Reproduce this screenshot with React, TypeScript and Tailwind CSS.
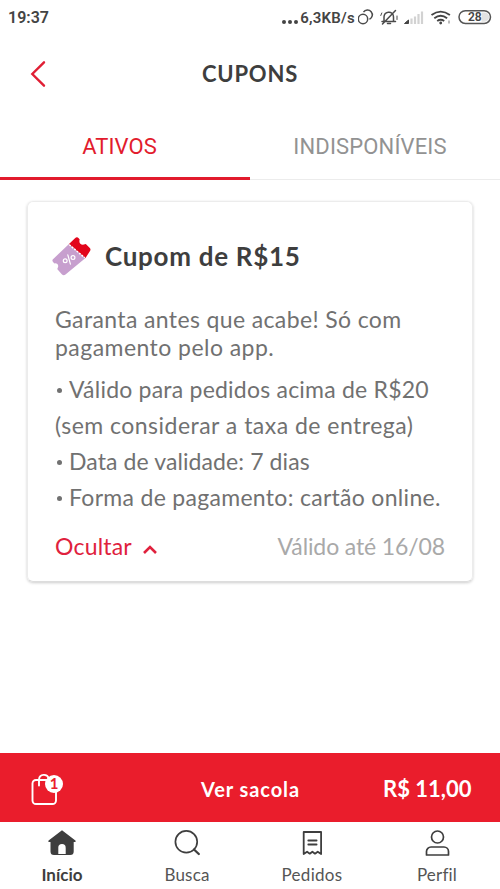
import type { ReactNode } from "react";

const navItems = [
  { label: "Início", icon: HomeIcon, text: "text-[#3e3e3e] font-bold" },
  { label: "Busca", icon: SearchIcon, text: "text-[#555] tracking-[0.2px]" },
  { label: "Pedidos", icon: ReceiptIcon, text: "text-[#555] tracking-[0.3px]" },
  { label: "Perfil", icon: ProfileIcon, text: "text-[#555] tracking-[0.2px]" },
];

const details = [
  { text: "Válido para pedidos acima de R$20", bullet: true, spacing: "tracking-[0.22px]" },
  { text: "(sem considerar a taxa de entrega)", bullet: false, spacing: "tracking-[0.48px]" },
  { text: "Data de validade: 7 dias", bullet: true, spacing: "tracking-[0.1px]" },
  { text: "Forma de pagamento: cartão online.", bullet: true, spacing: "tracking-[0.3px]" },
];

function HomeIcon() {
  return (
    <svg width="28" height="26" viewBox="0 0 28 26" fill="none">
      <path
        d="M14 .3 27.4 10.4c.6.6.2 1.6-.6 1.6H25.700v9.500a3.500 3.500 0 0 1-3.500 3.500H6a3.500 3.500 0 0 1-3.500-3.500V12H1.200c-.8 0-1.200-1-.6-1.600Z"
        fill="#3e3e3e"
      />
      <path d="M10.300 24v-6.200a3.700 3.700 0 0 1 7.400 0V24Z" fill="#fff" />
    </svg>
  );
}

function SearchIcon() {
  return (
    <svg width="28" height="26" viewBox="0 0 28 26" fill="none" stroke="#3e3e3e">
      <circle cx="13.300" cy="11.800" r="10.900" strokeWidth="1.700" />
      <path d="m21 19.500 4.800 4.500" strokeWidth="2.300" strokeLinecap="round" />
    </svg>
  );
}

function ReceiptIcon() {
  return (
    <svg width="28" height="26" viewBox="0 0 28 26" fill="none" stroke="#3e3e3e" strokeWidth="1.800" strokeLinecap="round" strokeLinejoin="round">
      <path d="M5.700 2h17.400v22l-3.400-2.300-2.700 2-2.600-2-2.600 2-2.700-2L5.700 24Z" />
      <path d="M10.300 10.500h8.300M10.300 14.500h8.300" />
    </svg>
  );
}

function ProfileIcon() {
  return (
    <svg width="28" height="26" viewBox="0 0 28 26" fill="none" stroke="#3e3e3e" strokeWidth="1.700">
      <circle cx="14.500" cy="7" r="6" />
      <path d="M3.500 25v-3.500a4.500 4.500 0 0 1 4.500-4.500h13a4.500 4.500 0 0 1 4.500 4.500V25Z" strokeLinejoin="round" />
    </svg>
  );
}

function TicketIcon() {
  return (
    <svg width="40" height="40" viewBox="0 0 40 40" fill="none">
      <path
        d="M17 8 1 23.200c-.8.8-.8 1.600 0 2.600l1.200 1.600c3-.8 5.300 1.800 3.300 5l-.3.700 4.600 5.100c1.200 1.300 2.400 1.400 3.700.3L33.500 22Z"
        fill="#c79fce"
      />
      <path
        d="m17 8 6-5.800c1.300-1.200 2.600-1.200 3.700 0l1 1.300c-1.300 3.400 1.600 6.300 5.200 4.700l.9-.2 4 4.100c1 1.100.9 2.200-.1 3.300L33.500 22Z"
        fill="#e2051b"
      />
      <path d="m17.300 8.800 15.400 13" stroke="#fff" strokeWidth="1.500" strokeDasharray="1.900 1.300" />
      <g stroke="#fff" strokeWidth="1.200">
        <circle cx="13.200" cy="24.700" r="1.900" />
        <circle cx="21" cy="21.600" r="1.900" />
        <path d="m18.400 28.200-2.600-9.400" strokeLinecap="round" />
      </g>
    </svg>
  );
}

function BagIcon() {
  return (
    <svg width="32" height="34" viewBox="0 0 32 34" fill="none" stroke="#fff" strokeWidth="1.900" strokeLinecap="round">
      <rect x="3.500" y="8" width="23.500" height="24" rx="3.500" />
      <path d="M10 13.500V7.300a5 5 0 0 1 9.700-1" />
    </svg>
  );
}

function StatusIcons() {
  return (
    <svg width="138" height="20" viewBox="0 0 138 20" fill="none">
      <g stroke="#4b4b4b" strokeWidth="1.500">
        <circle cx="5" cy="11" r="4.700" />
        <path d="M5.500 4.200a4.800 4.800 0 1 1 6 7" />
      </g>
      <g stroke="#4b4b4b" strokeWidth="1.500" strokeLinecap="round">
        <path d="M24 13.500h13.500M26 13V9a5 5 0 0 1 4-4.700A4.500 4.500 0 0 1 35.500 9v4.500M29.500 15.500h3M37.500 2.500 24.500 16" />
        <path d="m22.800 7.500 1-2.500M39 8v3.500" strokeWidth="1" />
      </g>
      <path d="M46.500 15.500 50.500 12v3.500Z" fill="#444" stroke="#444" />
      <path d="M53.500 10.500V16M57 8.500V16M60.500 6v10M64 3.500V16" stroke="#d2d2d2" strokeWidth="2.200" />
      <g stroke="#444" strokeWidth="1.900">
        <path d="M73.500 7q9.200-6.800 18.400 0M76.300 10.200q6.400-5 12.800 0M79.200 13q3.500-2.500 7 0" />
      </g>
      <circle cx="82.700" cy="15" r="1.400" fill="#444" />
      <path d="M91 12.500v3" stroke="#777" />
      <rect x="101" y="2.700" width="31.500" height="12.800" rx="6.400" stroke="#555" strokeWidth="1.500" />
      <path d="M123.500 4.500h3a4.600 4.600 0 0 1 0 9.200h-3Z" fill="#e3e3e3" />
    </svg>
  );
}

function Line({ children, className }: { children: ReactNode; className: string }) {
  return <p className={`whitespace-nowrap ${className}`}>{children}</p>;
}

export default function App() {
  return (
    <div className="flex h-[889px] w-[500px] flex-col overflow-hidden bg-white font-['Lato',sans-serif] text-[#3e3e3e]">
      <div className="flex h-9 shrink-0 items-center justify-between pl-2 font-['Roboto',sans-serif] text-[#444]">
        <span className="text-[16px] font-semibold leading-5">19:37</span>
        <div className="flex items-center">
          <span className="mr-[2px] mt-[8px] flex gap-[2px]">
            <i className="size-[4px] rounded-full bg-[#444]" />
            <i className="size-[4px] rounded-full bg-[#444]" />
            <i className="size-[4px] rounded-full bg-[#444]" />
          </span>
          <span className="mr-[3px] text-[15px] font-semibold leading-5 tracking-[0.25px]">6,3KB/s</span>
          <div className="relative w-[142px]">
            <StatusIcons />
            <span className="absolute left-[110px] top-[2px] text-[12px] font-semibold leading-[14px]">28</span>
          </div>
        </div>
      </div>

      <header className="grid h-[75px] shrink-0 grid-cols-[100px_1fr_100px] items-center">
        <svg className="ml-[30px]" width="17" height="28" viewBox="0 0 17 28" fill="none">
          <path d="M14 2.300 2.300 14 14 25.700" stroke="#e01f34" strokeWidth="2.400" strokeLinecap="round" />
        </svg>
        <h1 className="text-center text-[22px] font-bold leading-7 tracking-[0.8px]">CUPONS</h1>
      </header>

      <div className="grid h-[69px] shrink-0 grid-cols-2 border-b border-[#ececec] font-['Roboto',sans-serif] text-[22px]">
        <button className="-mb-px border-b-[3px] border-[#e21b2d] pr-[11px] pt-[4px] tracking-[0.1px] text-[#e21b2d]">ATIVOS</button>
        <button className="pr-[10px] pt-[2px] tracking-[0.15px] text-[#929292]">INDISPONÍVEIS</button>
      </div>

      <main className="min-h-0 flex-1 px-[27px] pt-[21px]">
        <section className="flex h-[381px] flex-col rounded-[6px] border border-[#ececec] border-b-[#ddd] px-[27px] shadow-[0_1px_3px_rgba(0,0,0,0.2)]">
          <div className="mt-[33px] flex h-[42px] items-center gap-[13px]">
            <div className="-ml-[3px]">
              <TicketIcon />
            </div>
            <h2 className="text-[26px] font-bold leading-8 tracking-[0.7px]">Cupom de R$15</h2>
          </div>
          <div className="mt-[28px] text-[23px] leading-[28px] text-[#717171]">
            <Line className="tracking-[0.37px]">Garanta antes que acabe! Só com</Line>
            <Line className="tracking-[0.45px]">pagamento pelo app.</Line>
          </div>
          <div className="mt-[10px] text-[23px] leading-[36px] text-[#717171]">
            {details.map(({ text, bullet, spacing }) => (
              <div key={text} className="flex items-center">
                {bullet && <i className="ml-[2px] mr-[7px] mt-[2px] size-[5px] rounded-full bg-[#717171]" />}
                <Line className={spacing}>{text}</Line>
              </div>
            ))}
          </div>
          <div className="mt-[15px] flex items-center justify-between text-[23px] leading-8">
            <button className="flex items-center gap-[10px] text-[#e0213d]">
              <span className="tracking-[0.2px]">Ocultar</span>
              <svg className="mt-[7px]" width="16" height="11" viewBox="0 0 16 11" fill="none">
                <path d="m2 9 6-6 6 6" stroke="currentColor" strokeWidth="2.600" />
              </svg>
            </button>
            <span className="tracking-[-0.12px] text-[#a9a9a9]">Válido até 16/08</span>
          </div>
        </section>
      </main>

      <div className="grid h-[69px] shrink-0 grid-cols-[110px_1fr_110px] items-center bg-[#ea1d2c] font-bold text-white">
        <div className="relative ml-[29px] mt-[2px]">
          <BagIcon />
          <span className="absolute left-[16px] top-[3px] flex size-[18px] items-center justify-center rounded-full bg-white text-[15px] text-[#ea1d2c]">1</span>
        </div>
        <span className="mt-[2px] pl-px text-center text-[20px] tracking-[0.9px]">Ver sacola</span>
        <span className="-ml-[7px] mt-px whitespace-nowrap text-[22px]">R$ 11,00</span>
      </div>

      <nav className="grid h-[67px] shrink-0 grid-cols-4">
        {navItems.map(({ label, icon: Icon, text }) => (
          <button key={label} className={`flex flex-col items-center justify-start pr-px pt-2 text-[17px] leading-5 ${text}`}>
            <Icon />
            <span className="mt-[9px]">{label}</span>
          </button>
        ))}
      </nav>
    </div>
  );
}
